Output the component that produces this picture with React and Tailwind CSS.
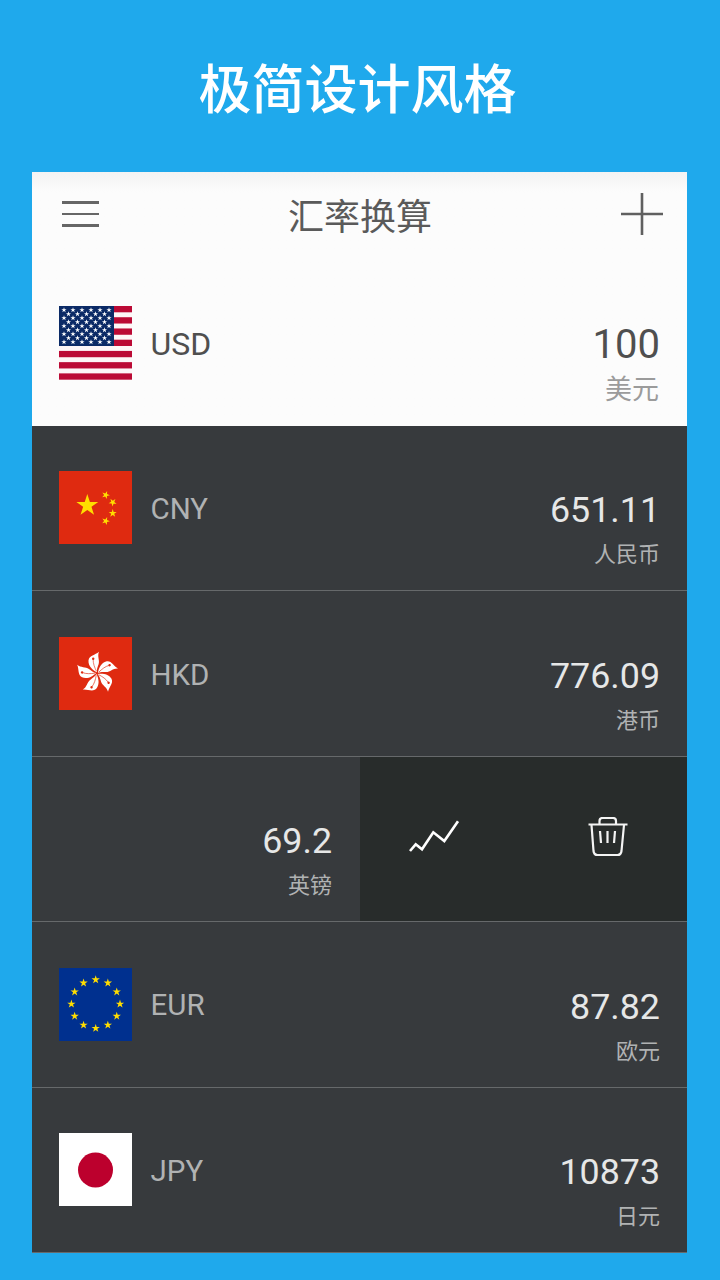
const font = { fontFamily: '"Roboto","Noto Sans CJK SC",sans-serif' };

function starPoints(cx, cy, r, rot = 0) {
  const pts = [];
  for (let i = 0; i < 10; i++) {
    const rad = i % 2 === 0 ? r : r * 0.382;
    const a = ((-90 + rot + i * 36) * Math.PI) / 180;
    pts.push(`${(cx + rad * Math.cos(a)).toFixed(2)},${(cy + rad * Math.sin(a)).toFixed(2)}`);
  }
  return pts.join(" ");
}

function UsFlag() {
  const stripes = [0, 1, 2, 3, 4, 5, 6];
  const stars = [];
  for (let row = 0; row < 9; row++) {
    const odd = row % 2 === 1;
    const n = odd ? 5 : 6;
    for (let c = 0; c < n; c++) {
      stars.push([(odd ? 9.5 : 5) + c * 9, 4 + row * 4]);
    }
  }
  return (
    <svg width="73" height="74" viewBox="0 0 73 74" className="block shrink-0">
      <rect width="73" height="74" fill="#fdf6f7" />
      {stripes.map((i) => (
        <rect key={i} x="0" y={i * 11.23} width="73" height="6.3" fill="#bb0a35" />
      ))}
      <rect width="55" height="40" fill="#0b2a66" />
      {stars.map(([x, y], i) => (
        <polygon key={i} points={starPoints(x, y, 2.8)} fill="#ffffff" />
      ))}
    </svg>
  );
}

function CnFlag() {
  return (
    <svg width="73" height="73" viewBox="0 0 73 73" className="block shrink-0">
      <rect width="73" height="73" fill="#df2a10" />
      <polygon points={starPoints(28.3, 34.5, 11.5)} fill="#ffde00" />
      <polygon points={starPoints(46.7, 24, 4.2, 20)} fill="#ffde00" />
      <polygon points={starPoints(53.7, 31.3, 4.2, 40)} fill="#ffde00" />
      <polygon points={starPoints(53.7, 42.3, 4.2, 0)} fill="#ffde00" />
      <polygon points={starPoints(46.7, 50, 4.2, 20)} fill="#ffde00" />
    </svg>
  );
}

function HkFlag() {
  return (
    <svg width="73" height="73" viewBox="0 0 73 73" className="block shrink-0">
      <rect width="73" height="73" fill="#df2a10" />
      <g transform="translate(38 36.3)">
        {[0, 72, 144, 216, 288].map((r) => (
          <g key={r} transform={`rotate(${r})`}>
            <path d="M0,-1 C-4,-3 -9,-7 -8.5,-13 C-7.5,-18 -2,-18 2,-21.5 C0,-17 3,-13 1.6,-9 C0.6,-6 -0.4,-4 0,-1 Z" fill="#ffffff" />
            <path d="M-0.5,-2 C-2.5,-6 -4,-10 -3.8,-14" stroke="#df2a10" strokeWidth="0.6" fill="none" />
            <circle cx="-3.8" cy="-14.5" r="1.2" fill="#df2a10" />
          </g>
        ))}
      </g>
    </svg>
  );
}

function EuFlag() {
  const stars = Array.from({ length: 12 }, (_, i) => {
    const a = (i * 30 * Math.PI) / 180;
    return [36.7 + 24.3 * Math.sin(a), 36 - 24.3 * Math.cos(a)];
  });
  return (
    <svg width="73" height="73" viewBox="0 0 73 73" className="block shrink-0">
      <rect width="73" height="73" fill="#00308f" />
      {stars.map(([x, y], i) => (
        <polygon key={i} points={starPoints(x, y, 4.4)} fill="#ffdd00" />
      ))}
    </svg>
  );
}

function JpFlag() {
  return (
    <svg width="73" height="73" viewBox="0 0 73 73" className="block shrink-0">
      <rect width="73" height="73" fill="#ffffff" />
      <circle cx="36.5" cy="37" r="17.5" fill="#bc002d" />
    </svg>
  );
}

function Amount({ value, label }) {
  return (
    <div className="flex flex-col items-end">
      <div className="text-[35.8px] leading-[42px] text-[#e6e7e7]">{value}</div>
      <div className="mt-[10px] text-[22px] leading-[28px] text-[#b0b2b3]">{label}</div>
    </div>
  );
}

function Row({ flag, code, value, label }) {
  return (
    <div className="flex h-[165.4px] items-start justify-between border-b border-[#66696b] bg-[#373a3d] pl-[27px] pr-[27px] pt-[45.4px]">
      <div className="flex items-center gap-[18.5px]">
        {flag}
        <span className="mt-[2.5px] text-[29.5px] leading-[36px] text-[#b0b2b3]">{code}</span>
      </div>
      <div className="pt-[18px]">
        <Amount value={value} label={label} />
      </div>
    </div>
  );
}

export default function App() {
  return (
    <div className="flex h-[1280px] w-[720px] flex-col overflow-hidden bg-[#1fa9ec]" style={font}>
      <h1 className="flex h-[172px] items-start justify-center pt-[55px] pr-[5px] text-[53px] font-medium leading-[72px] text-white">
        极简设计风格
      </h1>
      <div className="ml-[32px] w-[655px]">
        <div className="h-[254px] bg-gradient-to-b from-[#f3f3f3] via-[#fcfcfc] via-[8%] to-[#fcfcfc]">
          <div className="flex h-[88px] items-center justify-between pl-[30px] pr-[24px]">
            <div className="flex w-[37px] flex-col gap-[9px] pb-[4px]">
              <div className="h-[2.5px] bg-[#666666]" />
              <div className="h-[2.5px] bg-[#666666]" />
              <div className="h-[2.5px] bg-[#666666]" />
            </div>
            <div className="mt-[3px] text-[36px] leading-[48px] text-[#5a5a5a]">汇率换算</div>
            <svg width="42" height="42" viewBox="0 0 42 42" className="mb-[4px] block">
              <path d="M21 0V42M0 21H42" stroke="#606060" strokeWidth="2.6" fill="none" />
            </svg>
          </div>
          <div className="flex items-start justify-between pl-[27px] pr-[27px] pt-[46px]">
            <div className="flex items-center gap-[18.5px]">
              <UsFlag />
              <span className="mt-[2px] text-[32px] leading-[36px] text-[#4f4f4f]">USD</span>
            </div>
            <div className="flex flex-col items-end pt-[17px]">
              <div className="text-[40px] leading-[44px] text-[#4f4f4f]">100</div>
              <div className="mt-[7px] pr-[1px] text-[27px] leading-[32px] text-[#9b9b9b]">美元</div>
            </div>
          </div>
        </div>
        <Row flag={<CnFlag />} code="CNY" value="651.11" label="人民币" />
        <Row flag={<HkFlag />} code="HKD" value="776.09" label="港币" />
        <div className="flex h-[165.4px] border-b border-[#66696b] bg-[#373a3d]">
          <div className="flex w-[328px] justify-end pr-[28px] pt-[63px]">
            <Amount value="69.2" label="英镑" />
          </div>
          <div className="flex w-[327px] justify-between bg-[#282c2b] pl-[48px] pr-[59px] pt-[60px]">
            <svg width="52" height="36" viewBox="0 0 52 36" className="mt-[2px] block">
              <polyline points="2,32 7.7,25.3 14,30.3 25.3,13.3 36.3,22 50,2.3" stroke="#ffffff" strokeWidth="2.6" fill="none" />
            </svg>
            <svg width="40" height="40" viewBox="0 0 40 40" className="block">
              <path d="M0.5,7.5H39.5M3.5,8L5.5,34Q6,38 9.5,38H29.5Q33,38 33.5,34L36,8M11.5,7V4Q11.5,1 14.5,1H25Q28,1 28,4V7M12,14L13,26M19.5,14V26M27,14L26,26" stroke="#f4f4f4" strokeWidth="2.2" fill="none" />
            </svg>
          </div>
        </div>
        <Row flag={<EuFlag />} code="EUR" value="87.82" label="欧元" />
        <Row flag={<JpFlag />} code="JPY" value="10873" label="日元" />
      </div>
    </div>
  );
}
